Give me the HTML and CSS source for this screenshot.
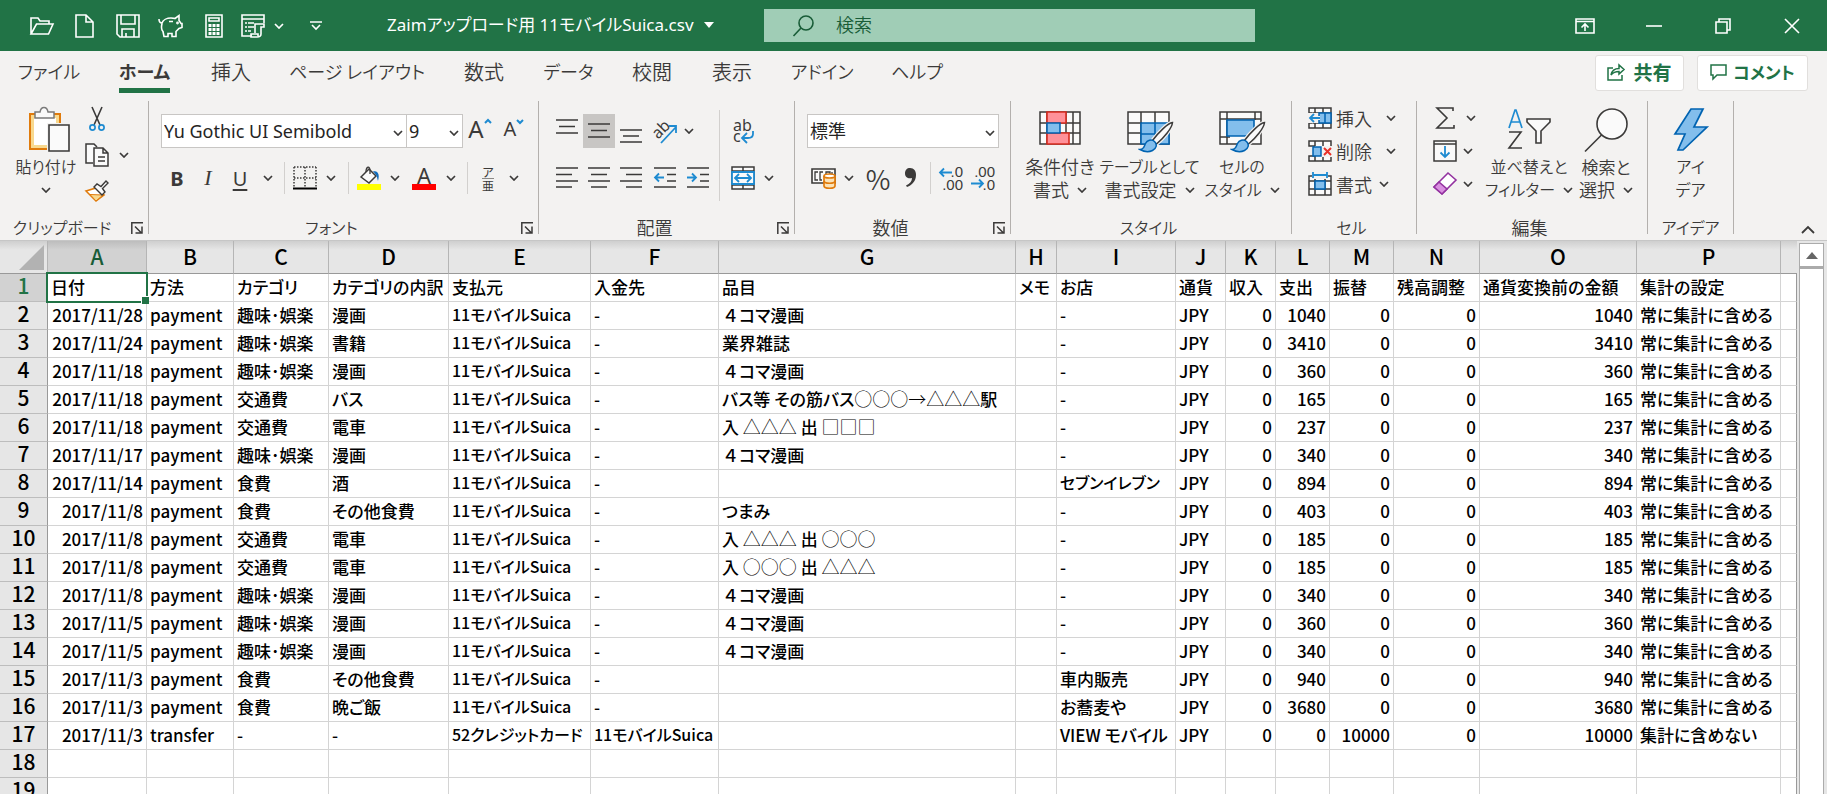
FILE: index.html
```html
<!DOCTYPE html>
<html lang="ja">
<head>
<meta charset="utf-8">
<title>Zaimアップロード用 11モバイルSuica.csv</title>
<link rel="stylesheet" href="styles.css">
</head>
<body>
<svg class="defs" aria-hidden="true">
  <symbol id="chev" viewBox="0 0 10 6"><path d="M1 1l4 4 4-4" fill="none" stroke="currentColor" stroke-width="1.7"/></symbol>
  <symbol id="launch" viewBox="0 0 12 12"><path d="M.8 12V.8H12M4 4.5l6 6M11 4.5V11H4.5" fill="none" stroke="currentColor" stroke-width="1.5"/></symbol>
  <symbol id="brush" viewBox="0 0 36 32"><path d="M34.500 1.500C30 2 20 12 14.500 19.500l4 3.500C26 17 34 7 34.500 1.500z" fill="#fafafa" stroke="#f3f2f1" stroke-width="4"/><path d="M34.500 1.500C30 2 20 12 14.500 19.500l4 3.500C26 17 34 7 34.500 1.500z" fill="#fafafa" stroke="#3b3a39" stroke-width="1.500"/><path d="M2 28.500c4 0 4-3 5.500-6s6-5 9-2 2 7-2 9-9 1-12.500-1z" fill="#83beec" stroke="#0063b1" stroke-width="1.500"/></symbol>
</svg>

<header class="titlebar">
  <div class="quick">
    <button aria-label="開く"><svg width="24" height="18" viewBox="0 0 24 18"><path d="M1 17V1h7l2 3h9v3M1 17h17.500L23 7H6.500L1 17z"/></svg></button>
    <button aria-label="新規"><svg width="19" height="24" viewBox="0 0 19 24"><path d="M1 1h10l7 7v15H1zM11 1v7h7"/></svg></button>
    <button aria-label="保存"><svg width="24" height="24" viewBox="0 0 24 24"><path d="M1 1h22v22H4l-3-3zM5 1v9h14V1M6 23v-8h12v8M10 23v-4"/></svg></button>
    <button aria-label="貯金箱"><svg width="25" height="23" viewBox="0 0 25 23"><path d="M1 5c0 3 1 4 3 4 1-3 5-5 9-5 2 0 3 0 4 .500l4-3v5l2 3h1v4l-3 1-3 3v5h-4v-3h-4v3H6l-1-5c-2-2-2-4-1-8M11 7.500h4"/><circle cx="19.500" cy="9" r=".6"/></svg></button>
    <button aria-label="電卓"><svg width="18" height="24" viewBox="0 0 18 24"><path d="M1 1h16v22H1zM4 4h10v3H4z"/><path d="M3.500 11.500h3m1 0h3m1 0h3m-11 4h3m1 0h3m1 0h3m-11 4h3m1 0h3m1 0h3" stroke-width="3"/></svg></button>
    <button class="wide" aria-label="フォーム"><svg width="25" height="24" viewBox="0 0 25 24"><path d="M11 22H1V1h22v8M1 5h22M4 9h2m1 0h6m-9 4h2m1 0h6m-9 4h2m1 0h3" /><path d="M14 19V10h9v3h-3v7c0 2-2 3-4 3h-6v-3h7v2"/></svg><svg class="chev"><use href="#chev"/></svg></button>
    <button aria-label="クイック アクセス ツール バーのユーザー設定"><svg width="12" height="10" viewBox="0 0 12 10"><path d="M0 1h12M2 4l4 4 4-4"/></svg></button>
  </div>
  <h1 class="doc">Zaimアップロード用 11モバイルSuica.csv<svg width="10" height="6" viewBox="0 0 10 6"><path class="tri" d="M0 0h10L5 6z"/></svg></h1>
  <label class="search"><svg width="21" height="22" viewBox="0 0 21 22"><circle cx="13" cy="8" r="7"/><path d="M8 13l-7.500 8"/></svg><input type="text" placeholder="検索" aria-label="検索"></label>
  <div class="window">
    <button aria-label="リボンの表示オプション"><svg width="20" height="16" viewBox="0 0 20 16"><path d="M1 1h18v14H1zM1 3.500h18M10 13V6M6.500 9.500L10 6l3.500 3.500"/></svg></button>
    <button aria-label="最小化"><svg width="16" height="16" viewBox="0 0 16 16"><path d="M0 8h16"/></svg></button>
    <button aria-label="元に戻す"><svg width="16" height="16" viewBox="0 0 16 16"><path d="M1 4h11v11H1zM4 4V1h11v11h-3"/></svg></button>
    <button aria-label="閉じる"><svg width="16" height="16" viewBox="0 0 16 16"><path d="M1 1l14 14M15 1L1 15"/></svg></button>
  </div>
</header>

<div class="tabbar">
  <nav class="tabs">
    <button class="kana">ファイル</button>
    <button class="kana active">ホーム</button>
    <button>挿入</button>
    <button class="kana">ページ レイアウト</button>
    <button>数式</button>
    <button class="kana">データ</button>
    <button>校閲</button>
    <button>表示</button>
    <button class="kana">アドイン</button>
    <button class="kana">ヘルプ</button>
  </nav>
  <div class="actions">
    <button><svg width="18" height="18" viewBox="0 0 18 18"><path d="M6 5H1v12h14v-5M4 12c1-5 4-6.500 8-6.500V2l5 4.500-5 4.500V8.500c-4 0-6 1-8 3.500z"/></svg>共有</button>
    <button class="kana"><svg width="17" height="16" viewBox="0 0 17 16"><path d="M1 1h15v10H7l-4 4v-4H1z"/></svg>コメント</button>
  </div>
</div>

<main class="ribbon">
  <section class="group clipboard">
    <div class="body">
      <button class="big"><svg width="48" height="46" viewBox="-6 0 48 46"><path d="M2 7h30v35H2z" fill="#fff" stroke="#e07b0c" stroke-width="2"/><path d="M4.500 9.500h25v30h-25z" fill="none" stroke="#f8d98f" stroke-width="3"/><path d="M7 11V5h5c1-6 7-6 8 0h6v6z" fill="#fafafa" stroke="#7a7a7a" stroke-width="1.500"/><path d="M19 16h23v30H19z" fill="#f3f2f1"/><path d="M21 18h20v26H21z" fill="#fafafa" stroke="#3b3a39" stroke-width="1.600"/></svg><span class="kana">貼り付け</span><svg class="chev"><use href="#chev"/></svg></button>
      <div class="tools">
        <button aria-label="切り取り"><svg width="16" height="24" viewBox="0 0 16 24"><path d="M3 0l8 18M13 0L5 18" fill="none" stroke="#3b3a39" stroke-width="1.600"/><g fill="none" stroke="#1e8bd1" stroke-width="1.700"><circle cx="3.500" cy="20.500" r="2.600"/><circle cx="12.500" cy="20.500" r="2.600"/></g></svg></button>
        <button aria-label="コピー"><svg width="24" height="24" viewBox="0 0 24 24" fill="#fafafa" stroke="#3b3a39" stroke-width="1.500"><path d="M8 20H1V1h8l3 3"/><path d="M9 5h9l5 5v13H9zM18 5v5h5M13 14h7M13 18h7"/></svg><svg class="chev"><use href="#chev"/></svg></button>
        <button aria-label="書式のコピー/貼り付け"><svg width="24" height="22" viewBox="0 0 24 22"><path d="M1 11l10-3 8 7-8 6z" fill="#fff" stroke="#e07b0c" stroke-width="1.600"/><path d="M5 14.500l13 .500-7 6z" fill="#f8d98f" stroke="#e07b0c"/><path d="M9 7l3-3 4 2.500L21 1l2 2-5.500 5.500L20 12l-3 3z" fill="#fafafa" stroke="#3b3a39" stroke-width="1.400"/></svg></button>
      </div>
    </div>
    <footer><span class="kana">クリップボード</span><button aria-label="クリップボード オプション"><svg width="12" height="12"><use href="#launch"/></svg></button></footer>
  </section>

  <section class="group font">
    <div class="body rows">
      <div class="line">
        <div class="combo face"><select aria-label="フォント"><option>Yu Gothic UI Semibold</option></select><svg class="chev"><use href="#chev"/></svg></div>
        <div class="combo size"><select aria-label="フォント サイズ"><option>9</option></select><svg class="chev"><use href="#chev"/></svg></div>
        <button class="grow" aria-label="フォント サイズの拡大"><span class="a-large">A</span><svg class="caret" width="8" height="5" viewBox="0 0 8 5"><path d="M1 4l3-3 3 3"/></svg></button>
        <button class="grow" aria-label="フォント サイズの縮小"><span class="a-small">A</span><svg class="caret" width="8" height="5" viewBox="0 0 8 5"><path d="M1 1l3 3 3-3"/></svg></button>
      </div>
      <div class="strip font-strip">
        <button class="glyph bold">B</button><button class="glyph italic">I</button><button class="glyph under">U</button><svg class="chev"><use href="#chev"/></svg><i class="sep"></i>
        <button aria-label="罫線"><svg width="24" height="24" viewBox="0 0 24 24" fill="none" stroke="#3b3a39" stroke-width="1.500"><path d="M1 1h22M1 12h22M1 1v20M12 1v20M23 1v20" stroke-dasharray="1.500 1.500"/><path d="M0 22.500h24" stroke="#000" stroke-width="2"/></svg></button><svg class="chev"><use href="#chev"/></svg><i class="sep"></i>
        <button aria-label="塗りつぶしの色"><svg width="24" height="24" viewBox="0 0 24 24"><path d="M4 11l8-8 7 7-7 7z" fill="#fafafa" stroke="#3b3a39" stroke-width="1.500"/><path d="M9 6c0-6 4-6 4-2v4" fill="none" stroke="#3b3a39" stroke-width="1.300"/><path d="M16 5c5 0 7 3 5 10-1-3-1-5-2-6z" fill="#0f6cbd"/><path d="M0 18h24v6H0z" fill="#ff0"/></svg></button><svg class="chev"><use href="#chev"/></svg>
        <button class="fontcolor" aria-label="フォントの色"><span>A</span></button><svg class="chev"><use href="#chev"/></svg><i class="sep"></i>
        <button class="ruby" aria-label="ふりがな"><span>ア</span><span>亜</span></button><svg class="chev"><use href="#chev"/></svg>
      </div>
    </div>
    <footer><span class="kana">フォント</span><button aria-label="フォント オプション"><svg width="12" height="12"><use href="#launch"/></svg></button></footer>
  </section>

  <section class="group align">
    <div class="body">
      <div class="rows">
        <div class="strip align-top">
          <button aria-label="上揃え"><svg width="22" height="24" viewBox="0 0 22 24"><path class="ln" d="M0 1h22M3 7.500h16M0 14h22"/></svg></button>
          <button class="on" aria-label="上下中央揃え"><svg width="22" height="24" viewBox="0 0 22 24"><path class="ln" d="M0 5h22M3 11.500h16M0 18h22"/></svg></button>
          <button aria-label="下揃え"><svg width="22" height="24" viewBox="0 0 22 24"><path class="ln" d="M0 11h22M3 17h16M0 23h22"/></svg></button>
          <button class="orient" aria-label="方向"><svg width="26" height="26" viewBox="0 0 26 26"><text x="1" y="18" transform="rotate(-45 8 14)">ab</text><path class="bl" d="M9 25L24 9M17 8h7v7"/></svg></button><svg class="chev"><use href="#chev"/></svg>
        </div>
        <div class="strip align-low">
          <button aria-label="左揃え"><svg width="22" height="22" viewBox="0 0 22 22"><path class="ln" d="M0 1h22M0 7.500h16M0 14h22M0 20h16"/></svg></button>
          <button aria-label="中央揃え"><svg width="22" height="22" viewBox="0 0 22 22"><path class="ln" d="M0 1h22M3 7.500h16M0 14h22M3 20h16"/></svg></button>
          <button aria-label="右揃え"><svg width="22" height="22" viewBox="0 0 22 22"><path class="ln" d="M0 1h22M6 7.500h16M0 14h22M6 20h16"/></svg></button>
          <button aria-label="インデントを減らす"><svg width="22" height="22" viewBox="0 0 22 22"><path class="ln" d="M0 1h22M13 7.500h9M13 14h9M0 20h22"/><path class="bl" d="M10 10.500H1M5 6.500l-4 4 4 4"/></svg></button>
          <button aria-label="インデントを増やす"><svg width="22" height="22" viewBox="0 0 22 22"><path class="ln" d="M0 1h22M13 7.500h9M13 14h9M0 20h22"/><path class="bl" d="M0 10.500h9M5 6.500l4 4-4 4"/></svg></button>
        </div>
      </div>
      <i class="sep tall"></i>
      <div class="rows">
        <div class="strip merge">
          <button class="wrap" aria-label="折り返して全体を表示する"><svg width="24" height="28" viewBox="0 0 24 28"><text x="2" y="14">ab</text><text x="2" y="25">c</text><path class="bl" d="M22 14v3q0 4-5 4h-5M16 16l-5 5 5 5"/></svg></button>
        </div>
        <div class="strip merge">
          <button aria-label="セルを結合して中央揃え"><svg width="24" height="24" viewBox="0 0 24 24"><path d="M1 1h22v22H1zM12 1v22M1 5h22M1 19h22" fill="#fafafa" stroke="#3b3a39" stroke-width="1.500"/><path d="M1 6h22v12H1z" fill="#fafafa" stroke="#1e8bd1" stroke-width="1.800"/><path class="bl" d="M4 12h16M8 8l-4 4 4 4M16 8l4 4-4 4"/></svg></button><svg class="chev"><use href="#chev"/></svg>
        </div>
      </div>
    </div>
    <footer><span>配置</span><button aria-label="配置オプション"><svg width="12" height="12"><use href="#launch"/></svg></button></footer>
  </section>

  <section class="group number">
    <div class="body rows">
      <div class="combo"><select aria-label="数値の書式"><option>標準</option></select><svg class="chev"><use href="#chev"/></svg></div>
      <div class="strip number-strip">
        <button aria-label="通貨表示形式"><svg width="25" height="22" viewBox="0 0 25 22"><path d="M1 2h23v14H1z" fill="#fafafa" stroke="#3b3a39" stroke-width="1.600"/><path d="M7 5H4v8h3M12 5H9v8h2M15 7V5h4v3M21 5v3" fill="none" stroke="#3b3a39" stroke-width="1.300"/><path d="M13 9v10c0 3 11 3 11 0V9" fill="#fbe3b8" stroke="#e07b0c" stroke-width="1.700"/><ellipse cx="18.500" cy="9" rx="5.500" ry="2" fill="#fff" stroke="#e07b0c" stroke-width="1.700"/><path d="M13 14c0 3 11 3 11 0" fill="none" stroke="#e07b0c" stroke-width="1.700"/></svg></button><svg class="chev"><use href="#chev"/></svg>
        <button class="percent" aria-label="パーセント スタイル">%</button>
        <button aria-label="桁区切りスタイル"><svg width="12" height="20" viewBox="0 0 12 20"><path d="M5 0c4 0 6 3 6 7 0 6-4 10-9 12l-1-1.500c4-2 6-4.500 6-7.500C3 11 0 9 0 5.500 0 2 2 0 5 0z" fill="#3b3a39"/></svg></button><i class="sep"></i>
        <button class="dec" aria-label="小数点以下の表示桁数を増やす"><svg width="26" height="30" viewBox="0 0 26 30"><text x="25" y="14" text-anchor="end">.0</text><text x="25" y="27" text-anchor="end">.00</text><path class="bl" d="M14 9.500H2M6 5.500l-4 4 4 4"/></svg></button>
        <button class="dec" aria-label="小数点以下の表示桁数を減らす"><svg width="26" height="30" viewBox="0 0 26 30"><text x="25" y="14" text-anchor="end">.00</text><text x="25" y="27" text-anchor="end">.0</text><path class="bl" d="M1 20.500h12M9 16.500l4 4-4 4"/></svg></button>
      </div>
    </div>
    <footer><span>数値</span><button aria-label="数値オプション"><svg width="12" height="12"><use href="#launch"/></svg></button></footer>
  </section>

  <section class="group styles">
    <div class="body">
      <button class="big"><svg width="42" height="46" viewBox="0 0 42 46"><path d="M1 5h40v32H1zM8 5v32M27 5v32M34 5v32M1 16h40M1 26h40" fill="#fafafa" stroke="#3b3a39" stroke-width="1.500"/><path d="M8 5h19v11H8zM8 26h22v11H8z" fill="#ff9199" stroke="#d92c20" stroke-width="1.600"/><path d="M8 16h13v10H8z" fill="#83beec" stroke="#0063b1" stroke-width="1.500"/></svg><span>条件付き</span><span>書式 <svg class="chev"><use href="#chev"/></svg></span></button>
      <button class="big"><svg width="46" height="46" viewBox="0 0 46 46"><path d="M1 5h41v32H1zM14 5v32M28 5v11M1 16h14M1 26h14" fill="#fafafa" stroke="#3b3a39" stroke-width="1.500"/><path d="M14 16h28v21H14zM28 16v21M14 27h28" fill="#83beec" stroke="#0063b1" stroke-width="1.600"/><use href="#brush" x="11" y="14" width="36" height="32"/></svg><span class="kana">テーブルとして</span><span>書式設定 <svg class="chev"><use href="#chev"/></svg></span></button>
      <button class="big"><svg width="46" height="46" viewBox="0 0 46 46"><path d="M1 5h41v32H1zM8 5v32M36 5v8M1 12h41M1 30h10" fill="#fafafa" stroke="#3b3a39" stroke-width="1.500"/><path d="M8 13h27v16H8z" fill="#83beec" stroke="#0063b1" stroke-width="1.600"/><use href="#brush" x="11" y="14" width="36" height="32"/></svg><span class="kana">セルの</span><span class="kana">スタイル <svg class="chev"><use href="#chev"/></svg></span></button>
    </div>
    <footer><span class="kana">スタイル</span></footer>
  </section>

  <section class="group cells">
    <div class="body tools">
      <button><svg width="24" height="22" viewBox="0 0 24 22"><path d="M1 1h22v20H1zM7 1v20M15 1v20M1 6h22M1 16h22" fill="#fafafa" stroke="#3b3a39" stroke-width="1.500"/><path d="M0 6h11v10H0z" fill="#f3f2f1"/><path d="M11 6h12v10H11zM17 6v10" fill="#83beec" stroke="#0063b1" stroke-width="1.500"/><path d="M12 11H2M6 7l-4 4 4 4" fill="none" stroke="#f3f2f1" stroke-width="4"/><path class="bl" d="M12 11H2M6 7l-4 4 4 4"/></svg>挿入<svg class="chev end"><use href="#chev"/></svg></button>
      <button><svg width="24" height="22" viewBox="0 0 24 22"><path d="M23 6V1H1v5h5v10H1v5h22v-5M7 1v5M15 1v5M7 16v5M15 16v5" fill="#fafafa" stroke="#3b3a39" stroke-width="1.500"/><path d="M5 7h8v9H5z" fill="#83beec" stroke="#0063b1" stroke-width="1.500"/><path d="M14 6h10v11H14z" fill="#f3f2f1"/><path d="M16 8l7 7M23 8l-7 7" stroke="#e8312a" stroke-width="2"/></svg>削除<svg class="chev end"><use href="#chev"/></svg></button>
      <button><svg width="24" height="24" viewBox="0 0 24 24"><path d="M1 4h22v19H1zM7 4v19M17 4v19M1 9h22M1 17h22" fill="#fafafa" stroke="#3b3a39" stroke-width="1.500"/><path d="M4 0h16v7H4z" fill="#f3f2f1"/><path d="M7 9h10v8H7z" fill="#83beec" stroke="#0063b1" stroke-width="1.500"/><path class="bl" d="M5 3h14M5 0v6M19 0v6"/></svg>書式<svg class="chev"><use href="#chev"/></svg></button>
    </div>
    <footer><span class="kana">セル</span></footer>
  </section>

  <section class="group edit">
    <div class="body">
      <div class="tools">
        <button class="sum" aria-label="合計"><svg width="24" height="22" viewBox="0 0 24 22"><path d="M20 4V1H4l10 10L4 21h17v-3" fill="none" stroke="#3b3a39" stroke-width="1.600"/></svg><svg class="chev"><use href="#chev"/></svg></button>
        <button aria-label="フィル"><svg width="24" height="22" viewBox="0 0 24 22"><path d="M1 1h22v20H1zM1 4h22" fill="#fafafa" stroke="#3b3a39" stroke-width="1.500"/><path class="bl" d="M12 6v11M7.500 12.500L12 17l4.500-4.500"/></svg><svg class="chev"><use href="#chev"/></svg></button>
        <button aria-label="クリア"><svg width="24" height="24" viewBox="0 0 24 24"><path d="M1 15L15 1l8 7L9 22z" fill="#fff" stroke="#9332a0" stroke-width="1.600"/><path d="M1 15l5-5 8 7-5 5z" fill="#d98fe0" stroke="#9332a0" stroke-width="1.600"/></svg><svg class="chev"><use href="#chev"/></svg></button>
      </div>
      <button class="big sort"><svg width="44" height="46" viewBox="0 0 44 46"><path d="M2 21L8 3h1l6 18M4.500 15h8" fill="none" stroke="#1e8bd1" stroke-width="1.700"/><path d="M2 25h12L2 41h13" fill="none" stroke="#3b3a39" stroke-width="1.600"/><path d="M20 12h23v3l-9 9v12h-5V24l-9-9z" fill="#fafafa" stroke="#3b3a39" stroke-width="1.600"/></svg><span class="kana">並べ替えと</span><span class="kana">フィルター <svg class="chev"><use href="#chev"/></svg></span></button>
      <button class="big find"><svg width="44" height="46" viewBox="0 0 44 46"><circle cx="28" cy="17" r="15" fill="#fafafa" stroke="#3b3a39" stroke-width="1.600"/><path d="M17.500 28L1 44.500" stroke="#3b3a39" stroke-width="1.600"/></svg><span class="tight">検索と</span><span>選択 <svg class="chev"><use href="#chev"/></svg></span></button>
    </div>
    <footer><span>編集</span></footer>
  </section>

  <section class="group ideas">
    <div class="body">
      <button class="big"><svg width="34" height="46" viewBox="0 0 34 46"><path d="M17 2h12l-9 18h13L9 43H4l7-16H1z" fill="#83beec" stroke="#0063b1" stroke-width="1.700"/></svg><span class="kana">アイ</span><span class="kana">デア</span></button>
    </div>
    <footer><span class="kana">アイデア</span></footer>
  </section>
  <button class="collapse" aria-label="リボンを折りたたむ"><svg width="14" height="9" viewBox="0 0 14 9"><path d="M1 8l6-6 6 6" fill="none" stroke="#3b3a39" stroke-width="1.800"/></svg></button>
</main>

<div class="workspace">
  <div class="sheet">
    <table>
      <colgroup><col class="c-row"><col class="c-a"><col class="c-b"><col class="c-c"><col class="c-d"><col class="c-e"><col class="c-f"><col class="c-g"><col class="c-h"><col class="c-i"><col class="c-j"><col class="c-k"><col class="c-l"><col class="c-m"><col class="c-n"><col class="c-o"><col class="c-p"><col></colgroup>
      <thead><tr><th class="corner"><svg width="25" height="25" viewBox="0 0 25 25"><path d="M25 0v25H0z" fill="#b2b2b2"/></svg></th><th class="sel">A</th><th>B</th><th>C</th><th>D</th><th>E</th><th>F</th><th>G</th><th>H</th><th>I</th><th>J</th><th>K</th><th>L</th><th>M</th><th>N</th><th>O</th><th>P</th><th></th></tr></thead>
      <tbody>
        <tr><th class="sel">1</th><td class="cursor">日付</td><td>方法</td><td>カテゴリ</td><td>カテゴリの内訳</td><td>支払元</td><td>入金先</td><td>品目</td><td>メモ</td><td>お店</td><td>通貨</td><td>収入</td><td>支出</td><td>振替</td><td>残高調整</td><td>通貨変換前の金額</td><td>集計の設定</td><td></td></tr>
        <tr><th>2</th><td class="n">2017/11/28</td><td>payment</td><td>趣味･娯楽</td><td>漫画</td><td class="k">11モバイルSuica</td><td>-</td><td><span class="wide-num">４</span>コマ漫画</td><td></td><td>-</td><td>JPY</td><td class="n">0</td><td class="n">1040</td><td class="n">0</td><td class="n">0</td><td class="n">1040</td><td>常に集計に含める</td><td></td></tr>
        <tr><th>3</th><td class="n">2017/11/24</td><td>payment</td><td>趣味･娯楽</td><td>書籍</td><td class="k">11モバイルSuica</td><td>-</td><td>業界雑誌</td><td></td><td>-</td><td>JPY</td><td class="n">0</td><td class="n">3410</td><td class="n">0</td><td class="n">0</td><td class="n">3410</td><td>常に集計に含める</td><td></td></tr>
        <tr><th>4</th><td class="n">2017/11/18</td><td>payment</td><td>趣味･娯楽</td><td>漫画</td><td class="k">11モバイルSuica</td><td>-</td><td><span class="wide-num">４</span>コマ漫画</td><td></td><td>-</td><td>JPY</td><td class="n">0</td><td class="n">360</td><td class="n">0</td><td class="n">0</td><td class="n">360</td><td>常に集計に含める</td><td></td></tr>
        <tr><th>5</th><td class="n">2017/11/18</td><td>payment</td><td>交通費</td><td>バス</td><td class="k">11モバイルSuica</td><td>-</td><td>バス等 その筋バス<span class="sym">○○○→△△△</span>駅</td><td></td><td>-</td><td>JPY</td><td class="n">0</td><td class="n">165</td><td class="n">0</td><td class="n">0</td><td class="n">165</td><td>常に集計に含める</td><td></td></tr>
        <tr><th>6</th><td class="n">2017/11/18</td><td>payment</td><td>交通費</td><td>電車</td><td class="k">11モバイルSuica</td><td>-</td><td>入 <span class="sym">△△△</span> 出 <span class="sym">□□□</span></td><td></td><td>-</td><td>JPY</td><td class="n">0</td><td class="n">237</td><td class="n">0</td><td class="n">0</td><td class="n">237</td><td>常に集計に含める</td><td></td></tr>
        <tr><th>7</th><td class="n">2017/11/17</td><td>payment</td><td>趣味･娯楽</td><td>漫画</td><td class="k">11モバイルSuica</td><td>-</td><td><span class="wide-num">４</span>コマ漫画</td><td></td><td>-</td><td>JPY</td><td class="n">0</td><td class="n">340</td><td class="n">0</td><td class="n">0</td><td class="n">340</td><td>常に集計に含める</td><td></td></tr>
        <tr><th>8</th><td class="n">2017/11/14</td><td>payment</td><td>食費</td><td>酒</td><td class="k">11モバイルSuica</td><td>-</td><td></td><td></td><td class="k">セブンイレブン</td><td>JPY</td><td class="n">0</td><td class="n">894</td><td class="n">0</td><td class="n">0</td><td class="n">894</td><td>常に集計に含める</td><td></td></tr>
        <tr><th>9</th><td class="n">2017/11/8</td><td>payment</td><td>食費</td><td>その他食費</td><td class="k">11モバイルSuica</td><td>-</td><td>つまみ</td><td></td><td>-</td><td>JPY</td><td class="n">0</td><td class="n">403</td><td class="n">0</td><td class="n">0</td><td class="n">403</td><td>常に集計に含める</td><td></td></tr>
        <tr><th>10</th><td class="n">2017/11/8</td><td>payment</td><td>交通費</td><td>電車</td><td class="k">11モバイルSuica</td><td>-</td><td>入 <span class="sym">△△△</span> 出 <span class="sym">○○○</span></td><td></td><td>-</td><td>JPY</td><td class="n">0</td><td class="n">185</td><td class="n">0</td><td class="n">0</td><td class="n">185</td><td>常に集計に含める</td><td></td></tr>
        <tr><th>11</th><td class="n">2017/11/8</td><td>payment</td><td>交通費</td><td>電車</td><td class="k">11モバイルSuica</td><td>-</td><td>入 <span class="sym">○○○</span> 出 <span class="sym">△△△</span></td><td></td><td>-</td><td>JPY</td><td class="n">0</td><td class="n">185</td><td class="n">0</td><td class="n">0</td><td class="n">185</td><td>常に集計に含める</td><td></td></tr>
        <tr><th>12</th><td class="n">2017/11/8</td><td>payment</td><td>趣味･娯楽</td><td>漫画</td><td class="k">11モバイルSuica</td><td>-</td><td><span class="wide-num">４</span>コマ漫画</td><td></td><td>-</td><td>JPY</td><td class="n">0</td><td class="n">340</td><td class="n">0</td><td class="n">0</td><td class="n">340</td><td>常に集計に含める</td><td></td></tr>
        <tr><th>13</th><td class="n">2017/11/5</td><td>payment</td><td>趣味･娯楽</td><td>漫画</td><td class="k">11モバイルSuica</td><td>-</td><td><span class="wide-num">４</span>コマ漫画</td><td></td><td>-</td><td>JPY</td><td class="n">0</td><td class="n">360</td><td class="n">0</td><td class="n">0</td><td class="n">360</td><td>常に集計に含める</td><td></td></tr>
        <tr><th>14</th><td class="n">2017/11/5</td><td>payment</td><td>趣味･娯楽</td><td>漫画</td><td class="k">11モバイルSuica</td><td>-</td><td><span class="wide-num">４</span>コマ漫画</td><td></td><td>-</td><td>JPY</td><td class="n">0</td><td class="n">340</td><td class="n">0</td><td class="n">0</td><td class="n">340</td><td>常に集計に含める</td><td></td></tr>
        <tr><th>15</th><td class="n">2017/11/3</td><td>payment</td><td>食費</td><td>その他食費</td><td class="k">11モバイルSuica</td><td>-</td><td></td><td></td><td>車内販売</td><td>JPY</td><td class="n">0</td><td class="n">940</td><td class="n">0</td><td class="n">0</td><td class="n">940</td><td>常に集計に含める</td><td></td></tr>
        <tr><th>16</th><td class="n">2017/11/3</td><td>payment</td><td>食費</td><td>晩ご飯</td><td class="k">11モバイルSuica</td><td>-</td><td></td><td></td><td>お蕎麦や</td><td>JPY</td><td class="n">0</td><td class="n">3680</td><td class="n">0</td><td class="n">0</td><td class="n">3680</td><td>常に集計に含める</td><td></td></tr>
        <tr><th>17</th><td class="n">2017/11/3</td><td>transfer</td><td>-</td><td>-</td><td class="k">52クレジットカード</td><td class="k">11モバイルSuica</td><td></td><td></td><td>VIEW モバイル</td><td>JPY</td><td class="n">0</td><td class="n">0</td><td class="n">10000</td><td class="n">0</td><td class="n">10000</td><td>集計に含めない</td><td></td></tr>
        <tr><th>18</th><td></td><td></td><td></td><td></td><td></td><td></td><td></td><td></td><td></td><td></td><td></td><td></td><td></td><td></td><td></td><td></td><td></td></tr>
        <tr><th>19</th><td></td><td></td><td></td><td></td><td></td><td></td><td></td><td></td><td></td><td></td><td></td><td></td><td></td><td></td><td></td><td></td><td></td></tr>
      </tbody>
    </table>
  </div>
  <div class="scrollbar">
    <button aria-label="上へスクロール"><svg width="12" height="7" viewBox="0 0 12 7"><path d="M0 7h12L6 0z" fill="#666"/></svg></button>
    <div class="thumb"></div>
  </div>
</div>
</body>
</html>
```
FILE: styles.css
```css
* { box-sizing: border-box; }

body {
  margin: 0;
  height: 100vh;
  overflow: hidden;
  display: flex;
  flex-direction: column;
  background: #f3f2f1;
  color: #3b3a39;
  font-family: "Noto Sans CJK JP", sans-serif;
  font-size: 18px;
  font-weight: 350;
  font-feature-settings: "palt";
}

.defs { position: absolute; width: 0; height: 0; }

button {
  border: 0;
  padding: 0;
  margin: 0;
  background: none;
  color: inherit;
  font: inherit;
  font-feature-settings: inherit;
  white-space: nowrap;
  display: flex;
  align-items: center;
  justify-content: center;
}

svg { display: block; flex: none; overflow: visible; }
.chev { width: 10px; height: 6px; }
.kana { font-size: 16px; }
.tight { font-size: 17px; }
.ln { fill: none; stroke: #3b3a39; stroke-width: 1.6; }
.bl { fill: none; stroke: #1e8bd1; stroke-width: 1.8; }

/* Title bar */
.titlebar {
  flex: none;
  height: 51px;
  display: flex;
  align-items: center;
  background: #217346;
  color: #fff;
}
.titlebar svg { fill: none; stroke: #fff; stroke-width: 1.6; }
.titlebar .tri { fill: #fff; stroke: none; }
.quick { display: flex; padding-left: 20px; width: 387px; }
.quick button { width: 43px; height: 40px; }
.quick .wide { width: 55px; gap: 8px; }
.quick .wide + button { margin-left: 4px; }
.doc {
  margin: 0;
  flex: none;
  width: 377px;
  display: flex;
  align-items: center;
  gap: 10px;
  font-family: "Noto Sans", "Noto Sans CJK JP", sans-serif;
  font-size: 17px;
  line-height: 24px;
  padding-bottom: 2px;
  font-weight: 400;
  white-space: nowrap;
}
.search {
  flex: 0 1 491px;
  height: 33px;
  display: flex;
  align-items: center;
  gap: 22px;
  padding-left: 29px;
  background: #a0cdb6;
}
.titlebar .search svg { stroke: #185c37; }
.search input {
  flex: 1;
  min-width: 0;
  border: 0;
  padding: 0 0 3px;
  background: none;
  font: inherit;
  color: #185c37;
}
.search input::placeholder { color: #185c37; opacity: 1; }
.window { margin-left: auto; display: flex; }
.window button { width: 69px; height: 40px; }
.window button:last-child { width: 70px; }

/* Tabs */
.tabbar {
  flex: none;
  height: 50px;
  display: flex;
  justify-content: space-between;
  align-items: flex-start;
}
.tabs {
  display: grid;
  grid-template-columns: 98px 93px 80px 172px 82px 87px 80px 80px 100px 90px;
  font-size: 20px;
}
.tabs button { height: 42px; justify-self: center; border-top: 3px solid transparent; border-bottom: 5px solid transparent; }
.tabs .kana { font-size: 18px; }
.tabs .active { border-bottom-color: #217346; font-weight: 700; }
.actions { display: flex; gap: 13px; padding: 4px 19px 0 0; }
.actions button {
  width: 89px;
  height: 36px;
  gap: 8px;
  border: 1px solid #e1dfdd;
  border-radius: 3px;
  background: #fff;
  color: #217346;
  font-size: 19px;
  font-weight: 700;
  line-height: 24px;
  padding-bottom: 2px;
}
.actions .kana { width: 111px; gap: 6px; font-size: 17px; }
.actions svg { fill: none; stroke: #217346; stroke-width: 1.5; }

/* Ribbon */
.ribbon { flex: none; display: flex; padding-bottom: 6px; position: relative; }
.group {
  flex: none;
  height: 133px;
  display: flex;
  flex-direction: column;
  justify-content: space-between;
  border-right: 1px solid #b3b0ad;
}
.body { display: flex; }
.rows { display: flex; flex-direction: column; gap: 13px; padding-top: 13px; }
.group footer {
  display: flex;
  align-items: center;
  height: 12px;
  line-height: 12px;
  padding-right: 5px;
}
.group footer span { flex: 1; text-align: center; white-space: nowrap; height: 14px; }
.group footer span:not(:last-child) { padding-right: 7px; }
.sep { width: 1px; height: 32px; background: #d2d0ce; }
.sep.tall { height: 91px; margin: 9px 7px 0 5px; }

.big { flex-direction: column; justify-content: flex-start; padding-top: 6px; }
.big > span { line-height: 23px; height: 23px; display: flex; align-items: center; gap: 8px; }
.big > svg:first-child { margin-bottom: 2px; }
.big > .chev { margin-top: 9px; }

.tools { display: flex; flex-direction: column; }
.tools button { height: 33px; justify-content: flex-start; }

.strip { display: grid; height: 34px; align-items: center; justify-items: center; }
.strip button { height: 34px; }

.combo {
  position: relative;
  height: 34px;
  border: 1px solid #c8c6c4;
  background: #fff;
}
.combo select {
  appearance: none;
  width: 100%;
  height: 100%;
  border: 0;
  padding: 0 0 0 2px;
  background: none;
  color: #252423;
  font-family: "Noto Sans", "Noto Sans CJK JP", sans-serif;
  font-size: 18px;
}
.combo .chev { position: absolute; right: 3px; top: 15px; pointer-events: none; }

.clipboard { width: 149px; }
.clipboard .body { padding-left: 10px; }
.clipboard .big { width: 72px; }
.clipboard .tools { padding-left: 3px; }
.clipboard .tools button { height: 36px; gap: 10px; min-width: 24px; }
.clipboard .tools button:first-child { justify-content: center; align-self: flex-start; }

.font { width: 390px; }
.font .body { padding-left: 12px; }
.line { display: flex; }
.face { width: 246px; }
.size { width: 56px; border-left: 0; }
.grow { width: 34px; color: #3b3a39; align-items: flex-start; }
.grow span { line-height: 30px; font-family: "Noto Sans", sans-serif; font-weight: 400; }
.a-large { font-size: 24px; }
.a-small { font-size: 20px; }
.caret { margin-top: 5px; fill: none; stroke: #1e8bd1; stroke-width: 2; }
.font-strip { grid-template-columns: 32px 30px 34px 22px 10px 31px 22px 12px 30px 22px 36px 17px 16px 26px 26px; }
.glyph { font-family: "Noto Sans", sans-serif; font-size: 20px; font-weight: 400; }
.bold { font-weight: 700; }
.italic { font-family: "Liberation Serif", serif; font-style: italic; font-size: 22px; }
.under { text-decoration: underline; text-underline-offset: 3px; }
.strip .fontcolor { width: 24px; height: 24px; border-bottom: 6px solid #f00; }
.fontcolor span { font-family: "Noto Sans", sans-serif; font-size: 22px; font-weight: 400; line-height: 18px; }
.ruby { flex-direction: column; font-size: 12px; line-height: 13px; font-weight: 400; }
.ruby span + span { border-top: 1px solid #8a8886; }

.align { width: 256px; }
.align .body { padding-left: 12px; }
.align-top { grid-template-columns: 32px 32px 32px 36px 12px; justify-content: start; }
.align-low { grid-template-columns: 32px 32px 32px 35px 32px; }
.merge { grid-template-columns: 32px 20px; }
.align .on { width: 32px; background: #c8c6c4; }
.orient text, .wrap text { font: 400 16px "Noto Sans", sans-serif; fill: #3b3a39; }

.number { width: 216px; }
.number .body { padding: 13px 11px 0 12px; }
.number-strip { grid-template-columns: 32px 20px 38px 28px 11px 30px 34px; }
.percent { font-size: 27px; }
.dec text { font: 400 15px "Liberation Sans", sans-serif; fill: #3b3a39; }

.styles { width: 281px; }
.styles .body { display: grid; grid-template-columns: 88px 91px 94px; padding-left: 5px; }

.cells { width: 125px; }
.cells .body { padding-left: 16px; }
.cells button { gap: 4px; }
.cells .chev { margin-left: 3px; }
.cells .chev.end { margin-left: 10px; }

.edit { width: 231px; }
.edit .body { padding-left: 16px; }
.edit .tools button { gap: 6px; }
.edit .tools .sum { gap: 9px; }
.edit .sort { width: 90px; margin-left: 8px; }
.edit .find { width: 64px; }

.ideas { width: 86px; }
.ideas .body { justify-content: center; }
.ideas footer { padding: 0; }
.collapse { margin: auto 12px 0 auto; }

/* Sheet */
.workspace { flex: 1; min-height: 0; display: flex; background: #e6e6e6; border-top: 1px solid #c6c6c6; }
.sheet { flex: 1; min-width: 0; overflow: hidden; }
table {
  width: 100%;
  table-layout: fixed;
  border-collapse: separate;
  border-spacing: 0;
  background: #fff;
  color: #000;
  font-size: 17px;
  font-weight: 500;
}
td, th { padding: 0; white-space: nowrap; line-height: 25px; height: 28px; vertical-align: top; }
td {
  border-right: 1px solid #d4d4d4;
  border-bottom: 1px solid #d4d4d4;
  padding: 0 3px;
}
td:last-child { border-right-color: #999; }
th { background: #e6e6e6; font-size: 21px; font-weight: 500; }
tbody th { border-right: 1px solid #999; border-bottom: 1px solid #bdbdbd; line-height: 23px; }
thead th {
  height: 33px;
  line-height: 30px;
  border-right: 1px solid #b5b5b5;
  border-bottom: 1px solid #999;
  background: linear-gradient(#cfcfcf, #e6e6e6 9px);
}
thead th:last-child { border-right: 0; }
thead .sel { background: linear-gradient(#bdbdbd, #d2d2d2 9px); color: #185c37; }
tbody .sel { background: #d2d2d2; color: #217346; }
.corner svg { margin: 4px 0 0 19px; }
.n { text-align: right; }
.k { font-size: 16px; }
.wide-num { font-feature-settings: normal; }
.sym { font-size: 18px; font-weight: 300; line-height: 20px; font-feature-settings: normal; }
.cursor { position: relative; }
.cursor::before {
  content: "";
  position: absolute;
  inset: -2px;
  border: 2px solid #217346;
}
.cursor::after {
  content: "";
  position: absolute;
  right: -3px;
  bottom: -3px;
  width: 7px;
  height: 7px;
  background: #217346;
  border: solid #fff;
  border-width: 1px 0 0 1px;
}
.c-row { width: 48px; }
.c-a { width: 99px; }
.c-b { width: 87px; }
.c-c { width: 95px; }
.c-d { width: 120px; }
.c-e { width: 142px; }
.c-f { width: 128px; }
.c-g { width: 297px; }
.c-h { width: 41px; }
.c-i { width: 119px; }
.c-j { width: 50px; }
.c-k { width: 50px; }
.c-l { width: 54px; }
.c-m { width: 64px; }
.c-n { width: 86px; }
.c-o { width: 157px; }
.c-p { width: 144px; }

.scrollbar { flex: none; width: 30px; padding: 2px 3px 0 2px; display: flex; flex-direction: column; }
.scrollbar button { height: 24px; border: 1px solid #ababab; background: #fff; }
.thumb { flex: 1; border: 1px solid #ababab; border-width: 2px 1px 0; background: #fff; }
```
